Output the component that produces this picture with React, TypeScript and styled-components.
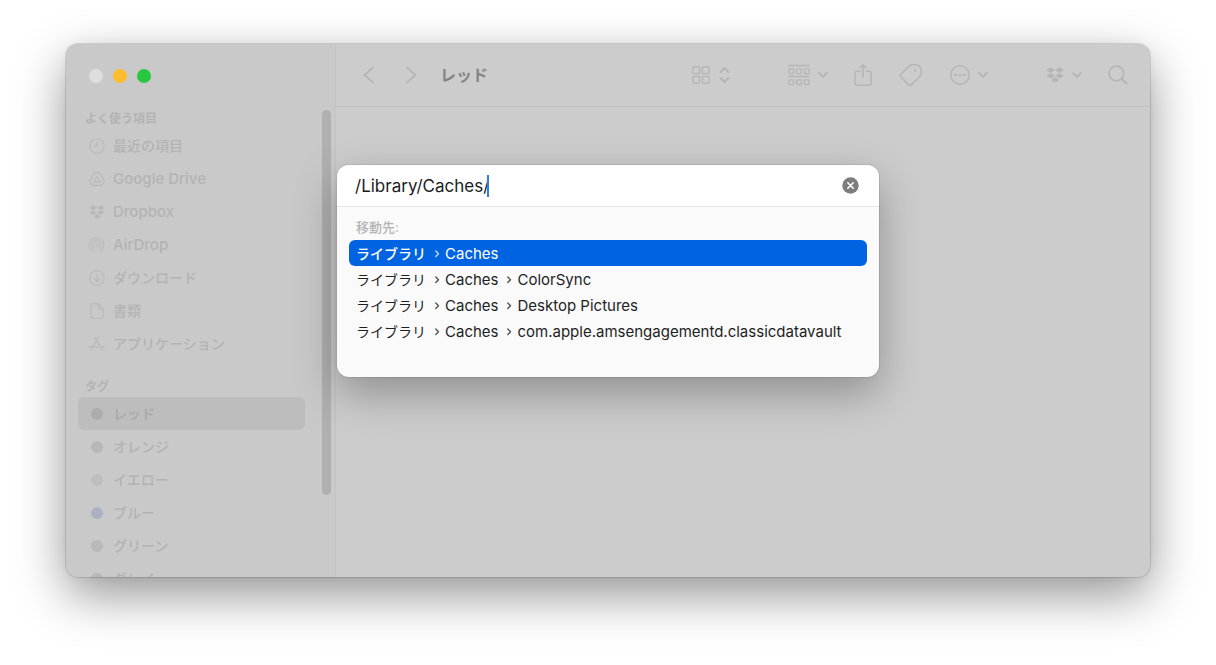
import React, { useState } from "react";
import styled, { createGlobalStyle } from "styled-components";

const GlobalStyle = createGlobalStyle`
  * { box-sizing: border-box; }
  html, body { margin: 0; padding: 0; }
  body {
    background: #ffffff;
    font-family: Inter, "Noto Sans CJK JP", sans-serif;
    overflow: hidden;
  }
  button { font: inherit; border: 0; background: none; padding: 0; margin: 0; color: inherit; }
  h1, h2, ul { margin: 0; padding: 0; }
  ul { list-style: none; }
  svg { display: block; flex: none; }
`;

const Desktop = styled.div`
  height: 100vh;
  padding: 44px 66px 88px;
  display: flex;
`;

const FinderWindow = styled.main`
  position: relative;
  flex: 1;
  min-width: 0;
  display: flex;
  border-radius: 12px;
  background: #cccccc;
  box-shadow: 0 0 0 1px rgba(0, 0, 0, 0.12), 0 18px 50px rgba(0, 0, 0, 0.42), 0 0 12px rgba(0, 0, 0, 0.04);
`;

const Sidebar = styled.aside`
  width: 270px;
  flex: none;
  display: flex;
  flex-direction: column;
  overflow: hidden;
  background: #c9c9c9;
  border-right: 1px solid #c3c3c3;
  border-radius: 12px 0 0 12px;
`;

const TrafficLights = styled.div`
  flex: none;
  height: 63px;
  padding-left: 23px;
  display: flex;
  align-items: center;
  gap: 10px;
`;

const Light = styled.button<{ $color: string }>`
  width: 14px;
  height: 14px;
  border-radius: 50%;
  background: ${(p) => p.$color};
`;

const SidebarBody = styled.div`
  flex: 1;
  min-height: 0;
  display: flex;
  justify-content: space-between;
  padding: 0 4px 0 12px;
`;

const Sections = styled.nav`
  width: 227px;
  overflow: hidden;
  display: flex;
  flex-direction: column;
  gap: 15px;
`;

const Section = styled.section`
  flex: none;
`;

const SectionTitle = styled.h2`
  height: 22px;
  line-height: 24px;
  padding-left: 7px;
  font-size: 12px;
  font-weight: 700;
  color: #b3b3b3;
`;

const SidebarItem = styled.button<{ $selected?: boolean }>`
  width: 100%;
  height: 33px;
  padding: 0 10px;
  display: flex;
  align-items: center;
  gap: 8px;
  border-radius: 6px;
  text-align: left;
  white-space: nowrap;
  color: ${(p) => (p.$selected ? "#a9a9a9" : "#b3b3b3")};
  background: ${(p) => (p.$selected ? "#bdbdbd" : "transparent")};
`;

const ItemName = styled.span<{ $latin?: boolean }>`
  font-size: ${(p) => (p.$latin ? "15px" : "14px")};
  line-height: 20px;
  height: ${(p) => (p.$latin ? "20px" : "22px")};
  font-family: ${(p) => (p.$latin ? "Inter, sans-serif" : '"Noto Sans CJK JP", sans-serif')};
  font-weight: 500;
`;

const IconSlot = styled.span`
  width: 17px;
  display: flex;
  justify-content: center;
  color: #b8b8b8;
`;

const TagDot = styled.span<{ $color: string }>`
  width: 12px;
  height: 12px;
  border-radius: 50%;
  background: ${(p) => p.$color};
`;

const ScrollThumb = styled.div`
  width: 9px;
  height: 385px;
  margin-top: 3px;
  border-radius: 5px;
  background: #b0b0b0;
`;

const Content = styled.section`
  flex: 1;
  min-width: 0;
`;

const Toolbar = styled.header`
  height: 63px;
  padding: 0 22px 0 27px;
  display: flex;
  align-items: center;
  border-bottom: 1px solid #c0c0c0;
  color: #b5b5b5;
`;

const NavButtons = styled.div`
  display: flex;
  gap: 30px;
`;

const FolderTitle = styled.h1`
  margin-left: 23px;
  font-size: 16px;
  line-height: 24px;
  font-weight: 700;
  color: #858585;
`;

const ToolGroups = styled.div`
  margin-left: auto;
  display: flex;
  gap: 58px;
`;

const ToolGroup = styled.div`
  display: flex;
  align-items: center;
  gap: 26px;
`;

const ToolButton = styled.button`
  display: flex;
  align-items: center;
  gap: 8px;
`;

const GoToDialog = styled.div`
  position: absolute;
  top: 121px;
  left: 50%;
  width: 542px;
  transform: translateX(-50%);
  border-radius: 12px;
  overflow: hidden;
  background: #fafafa;
  box-shadow: 0 0 0 1px rgba(0, 0, 0, 0.08), 0 16px 44px rgba(0, 0, 0, 0.3);
`;

const PathBar = styled.div`
  height: 42px;
  padding: 0 20px 0 18px;
  display: flex;
  align-items: center;
  background: #ffffff;
  border-bottom: 1px solid #e6e6e6;
`;

const PathInput = styled.input`
  field-sizing: content;
  padding: 0;
  border: 0;
  outline: 0;
  background: transparent;
  font-family: inherit;
  font-size: 17px;
  line-height: 24px;
  color: #1c1c1c;
`;

const Caret = styled.span`
  width: 2px;
  height: 22px;
  margin-left: -2px;
  background: #2f7bf0;
`;

const ClearButton = styled.button`
  margin-left: auto;
`;

const ResultsLabel = styled.h2`
  padding: 10px 19px 3px;
  font-size: 13px;
  line-height: 20px;
  font-weight: 500;
  color: #b4b4b4;
`;

const Results = styled.ul`
  padding: 0 12px 33px;
`;

const ResultButton = styled.button<{ $selected: boolean }>`
  width: 100%;
  height: 26px;
  padding: 2px 7px 0;
  display: flex;
  align-items: center;
  gap: 7px;
  border-radius: 6px;
  font-size: 15px;
  line-height: 22px;
  white-space: nowrap;
  color: ${(p) => (p.$selected ? "#ffffff" : "#1e1e1e")};
  background: ${(p) => (p.$selected ? "#0063e1" : "transparent")};
`;

const Root = styled.span<{ $selected: boolean }>`
  font-size: 14px;
  font-weight: ${(p) => (p.$selected ? 500 : 400)};
`;

const Step = styled.span`
  display: flex;
  align-items: center;
  gap: 4px;
`;

const line = {
  fill: "none",
  stroke: "currentColor",
  strokeLinecap: "round" as const,
  strokeLinejoin: "round" as const,
};

const BackIcon = () => (
  <svg width="12" height="18" viewBox="0 0 12 18" {...line} strokeWidth="1.7"><path d="M10 1.5 1.5 9l8.5 7.5" /></svg>
);
const ForwardIcon = () => (
  <svg width="12" height="18" viewBox="0 0 12 18" {...line} strokeWidth="1.7"><path d="M2 1.5 10.5 9 2 16.5" /></svg>
);
const ChevronDown = () => (
  <svg width="10" height="8" viewBox="0 0 10 8" {...line} strokeWidth="1.9"><path d="M1.2 2 5 5.9 8.8 2" /></svg>
);
const UpDown = () => (
  <svg width="12" height="18" viewBox="0 0 12 18" {...line} strokeWidth="1.8">
    <path d="M2.5 6l4-4 4 4M2.5 12l4 4 4-4" />
  </svg>
);
const GridIcon = () => (
  <svg width="18" height="18" viewBox="0 0 18 18" {...line} strokeWidth="1.4">
    <rect x=".8" y=".8" width="6.8" height="6.8" rx="1.2" />
    <rect x="10.4" y=".8" width="6.8" height="6.8" rx="1.2" />
    <rect x=".8" y="10.4" width="6.8" height="6.8" rx="1.2" />
    <rect x="10.4" y="10.4" width="6.8" height="6.8" rx="1.2" />
  </svg>
);
const GroupIcon = () => (
  <svg width="22" height="22" viewBox="0 0 22 22" {...line} strokeWidth="1.4">
    <path d="M1 1.5h20M1 12.5h20" />
    {[4.9, 15.9].map((y) =>
      [1, 8.7, 16.4].map((x) => <rect key={`${x}-${y}`} x={x} y={y} width="4.7" height="4.7" rx="1" />)
    )}
  </svg>
);
const ShareIcon = () => (
  <svg width="18" height="24" viewBox="0 0 18 24" {...line} strokeWidth="1.5">
    <path d="M5.8 8.2H3a2.1 2.1 0 0 0-2.1 2.1v9.8A2.1 2.1 0 0 0 3 22.2h12a2.1 2.1 0 0 0 2.1-2.1v-9.8A2.1 2.1 0 0 0 15 8.2h-2.8M9 14.8V2M5.8 4.9 9 1.7l3.2 3.2" />
  </svg>
);
const TagIcon = () => (
  <svg width="26" height="24" viewBox="0 0 26 24" {...line} strokeWidth="1.5">
    <path d="M13.8 1.8h4.7c.8 0 1.5.3 2 .8l1.6 1.6c.6.6.9 1.2.9 2v4.9c0 .7-.3 1.4-.8 1.9l-8.9 8.9c-.8.8-1.7.8-2.5 0l-8.1-8.1c-.8-.8-.8-1.7 0-2.5l9.1-8.7c.5-.5 1.2-.8 2-.8Z" />
    <circle cx="17.2" cy="7.6" r="1.3" fill="currentColor" stroke="none" />
  </svg>
);
const MoreIcon = () => (
  <svg width="20" height="20" viewBox="0 0 20 20" {...line} strokeWidth="1.5">
    <circle cx="10" cy="10" r="9.2" />
    <g fill="currentColor" stroke="none">
      <circle cx="5.7" cy="10" r="1.3" /><circle cx="10" cy="10" r="1.3" /><circle cx="14.3" cy="10" r="1.3" />
    </g>
  </svg>
);
const SearchIcon = () => (
  <svg width="20" height="20" viewBox="0 0 20 20" {...line} strokeWidth="1.7">
    <circle cx="8.4" cy="8.4" r="7.3" /><path d="m13.8 13.8 4.8 4.8" strokeWidth="2.1" />
  </svg>
);
const DropboxIcon = ({ size = 18 }: { size?: number }) => (
  <svg width={size} height={size} viewBox="0 0 18 18" fill="currentColor">
    <path d="M4.6 1.3 9 4.1 4.6 6.9.2 4.1ZM13.4 1.3l4.4 2.8-4.4 2.8L9 4.1ZM4.6 6.9 9 9.7l-4.4 2.8L.2 9.7ZM13.4 6.9l4.4 2.8-4.4 2.8L9 9.7ZM9 11.3l4.2 2.7L9 16.7 4.8 14Z" />
  </svg>
);
const ClockIcon = () => (
  <svg width="16" height="16" viewBox="0 0 16 16" {...line} strokeWidth="1.1">
    <circle cx="8" cy="8" r="7.2" /><path d="M8 3.8V8H4.6" />
  </svg>
);
const DriveIcon = () => (
  <svg width="16" height="16" viewBox="0 0 16 16" {...line} strokeWidth="1.1">
    <path d="M5.7 1.6h4.6l5 8.4-2.3 4.4H3L.7 10Z" /><path d="m8 5.5 3.2 5.4H4.8Z" />
  </svg>
);
const AirDropIcon = () => (
  <svg width="17" height="16" viewBox="0 0 17 16" {...line} strokeWidth="1">
    <path d="M4.6 14.6a7.6 7.6 0 1 1 7.8 0M5.4 12.3a5.3 5.3 0 1 1 6.2 0M6.6 10.3a3.1 3.1 0 1 1 3.8 0" />
    <circle cx="8.5" cy="8" r="1.1" fill="currentColor" stroke="none" />
  </svg>
);
const DownloadIcon = () => (
  <svg width="16" height="16" viewBox="0 0 16 16" {...line} strokeWidth="1.1">
    <circle cx="8" cy="8" r="7.2" /><path d="M8 4.2v7.2M5.4 9 8 11.5 10.6 9" />
  </svg>
);
const DocumentIcon = () => (
  <svg width="14" height="16" viewBox="0 0 14 16" {...line} strokeWidth="1.1">
    <path d="M8 .7H2.6C1.5.7.9 1.3.9 2.4v11.2c0 1.1.6 1.7 1.7 1.7h8.8c1.1 0 1.7-.6 1.7-1.7V6Z" />
    <path d="M8 .9v3.6c0 1 .5 1.5 1.5 1.5H13" />
  </svg>
);
const AppsIcon = () => (
  <svg width="17" height="16" viewBox="0 0 17 16" {...line} strokeWidth="1.4">
    <path d="M6.8 1.6 12.9 12M14.3 14.2l-.5-.8M10.2 1.6 4.7 10.8M2.7 14.2l.7-1.2M1 10.9h8.6M12.6 10.9H16" />
  </svg>
);
const Separator = () => (
  <svg width="8" height="8" viewBox="0 0 8 8" {...line} strokeWidth="1.4" opacity="0.75"><path d="m2.8 1 2.7 2.7-2.7 2.7" /></svg>
);
const ClearIcon = () => (
  <svg width="17" height="17" viewBox="0 0 17 17">
    <circle cx="8.5" cy="8.5" r="8.2" fill="#7d7d7d" />
    <path d="m5.8 5.8 5.4 5.4M11.2 5.8l-5.4 5.4" stroke="#fff" strokeWidth="1.6" strokeLinecap="round" />
  </svg>
);

const favorites = [
  { name: "最近の項目", Icon: ClockIcon },
  { name: "Google Drive", Icon: DriveIcon, latin: true },
  { name: "Dropbox", Icon: () => <DropboxIcon size={16} />, latin: true },
  { name: "AirDrop", Icon: AirDropIcon, latin: true },
  { name: "ダウンロード", Icon: DownloadIcon },
  { name: "書類", Icon: DocumentIcon },
  { name: "アプリケーション", Icon: AppsIcon },
];

const tags = [
  { name: "レッド", color: "#acacac" },
  { name: "オレンジ", color: "#b7b7b7" },
  { name: "イエロー", color: "#bebebe" },
  { name: "ブルー", color: "#a9b1c2" },
  { name: "グリーン", color: "#b9b9b9" },
  { name: "グレイ", color: "#b7b7b7" },
];

const results = [
  ["Caches"],
  ["Caches", "ColorSync"],
  ["Caches", "Desktop Pictures"],
  ["Caches", "com.apple.amsengagementd.classicdatavault"],
];

export default function App() {
  const [path, setPath] = useState("/Library/Caches/");
  const [selected, setSelected] = useState(0);

  return (
    <>
      <GlobalStyle />
      <Desktop>
        <FinderWindow>
          <Sidebar>
            <TrafficLights>
              <Light $color="#dcdddf" aria-label="閉じる" />
              <Light $color="#fdbc2e" aria-label="しまう" />
              <Light $color="#28c840" aria-label="拡大" />
            </TrafficLights>
            <SidebarBody>
              <Sections>
                <Section>
                  <SectionTitle>よく使う項目</SectionTitle>
                  <ul>
                    {favorites.map(({ name, Icon, latin }) => (
                      <li key={name}>
                        <SidebarItem>
                          <IconSlot><Icon /></IconSlot>
                          <ItemName $latin={latin}>{name}</ItemName>
                        </SidebarItem>
                      </li>
                    ))}
                  </ul>
                </Section>
                <Section>
                  <SectionTitle>タグ</SectionTitle>
                  <ul>
                    {tags.map(({ name, color }, i) => (
                      <li key={name}>
                        <SidebarItem $selected={i === 0}>
                          <IconSlot><TagDot $color={color} /></IconSlot>
                          <ItemName>{name}</ItemName>
                        </SidebarItem>
                      </li>
                    ))}
                  </ul>
                </Section>
              </Sections>
              <ScrollThumb />
            </SidebarBody>
          </Sidebar>

          <Content>
            <Toolbar>
              <NavButtons>
                <ToolButton aria-label="戻る"><BackIcon /></ToolButton>
                <ToolButton aria-label="進む"><ForwardIcon /></ToolButton>
              </NavButtons>
              <FolderTitle>レッド</FolderTitle>
              <ToolGroups>
                <ToolGroup>
                  <ToolButton aria-label="表示"><GridIcon /><UpDown /></ToolButton>
                </ToolGroup>
                <ToolGroup>
                  <ToolButton aria-label="グループ"><GroupIcon /><ChevronDown /></ToolButton>
                  <ToolButton aria-label="共有"><ShareIcon /></ToolButton>
                  <ToolButton aria-label="タグを編集"><TagIcon /></ToolButton>
                  <ToolButton aria-label="アクション"><MoreIcon /><ChevronDown /></ToolButton>
                </ToolGroup>
                <ToolGroup>
                  <ToolButton aria-label="Dropbox"><DropboxIcon /><ChevronDown /></ToolButton>
                  <ToolButton aria-label="検索"><SearchIcon /></ToolButton>
                </ToolGroup>
              </ToolGroups>
            </Toolbar>
          </Content>

          <GoToDialog role="dialog" aria-label="フォルダへ移動">
            <PathBar>
              <PathInput aria-label="パス" value={path} onChange={(e) => setPath(e.target.value)} />
              <Caret />
              <ClearButton aria-label="消去" onClick={() => setPath("")}><ClearIcon /></ClearButton>
            </PathBar>
            <ResultsLabel>移動先:</ResultsLabel>
            <Results>
              {results.map((steps, i) => (
                <li key={steps.join("/")}>
                  <ResultButton $selected={i === selected} onClick={() => setSelected(i)}>
                    <Root $selected={i === selected}>ライブラリ</Root>
                    {steps.map((step) => (
                      <Step key={step}><Separator />{step}</Step>
                    ))}
                  </ResultButton>
                </li>
              ))}
            </Results>
          </GoToDialog>
        </FinderWindow>
      </Desktop>
    </>
  );
}
